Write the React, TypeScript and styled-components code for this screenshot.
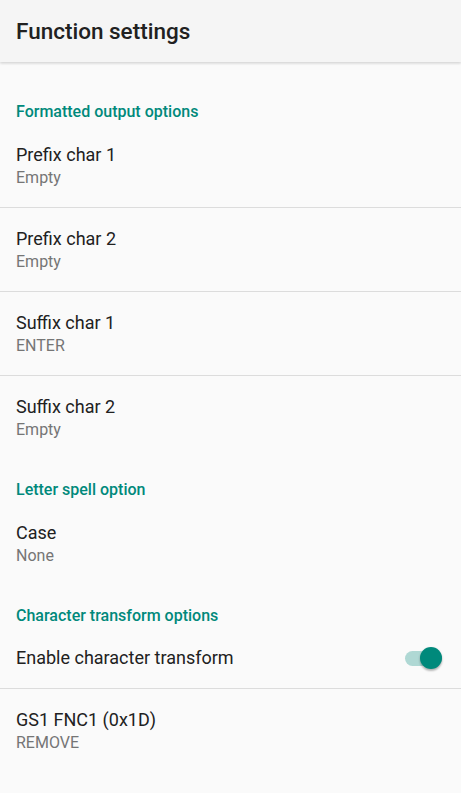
import React, { FC, useState } from 'react'
import styled, { createGlobalStyle } from 'styled-components';

const GlobalStyle = createGlobalStyle`
  html, body {
    margin: 0;
    padding: 0;
    background: #fafafa;
  }
  body {
    font-family: Roboto, "Noto Sans", sans-serif;
    -webkit-font-smoothing: antialiased;
  }
`;

type Pref = { title: string; summary?: string; toggle?: boolean };
type Category = { title: string; items: Pref[] };

const CATEGORIES: Category[] = [
  {
    title: 'Formatted output options',
    items: [
      { title: 'Prefix char 1', summary: 'Empty' },
      { title: 'Prefix char 2', summary: 'Empty' },
      { title: 'Suffix char 1', summary: 'ENTER' },
      { title: 'Suffix char 2', summary: 'Empty' },
    ],
  },
  {
    title: 'Letter spell option',
    items: [{ title: 'Case', summary: 'None' }],
  },
  {
    title: 'Character transform options',
    items: [
      { title: 'Enable character transform', toggle: true },
      { title: 'GS1 FNC1 (0x1D)', summary: 'REMOVE' },
    ],
  },
];

const Switch: FC<{ initial: boolean }> = ({ initial }) => {
  const [on, setOn] = useState(initial);
  return (
    <StyledSwitch onClick={() => setOn(v => !v)}>
      <StyledTrack $on={on} />
      <StyledThumb $on={on} />
    </StyledSwitch>
  );
};

const App: FC = () => {
  return (
    <>
      <GlobalStyle />
      <StyledScreen>
        <StyledToolbar>
          <StyledToolbarTitle>Function settings</StyledToolbarTitle>
        </StyledToolbar>
        <StyledList>
          {CATEGORIES.map(cat => (
            <section key={cat.title}>
              <StyledCategory>{cat.title}</StyledCategory>
              {cat.items.map((item, i) => (
                <StyledItem key={item.title} $single={!item.summary} $divider={i < cat.items.length - 1}>
                  <StyledText>
                    <StyledTitle>{item.title}</StyledTitle>
                    {item.summary && <StyledSummary>{item.summary}</StyledSummary>}
                  </StyledText>
                  {item.toggle !== undefined && <Switch initial={item.toggle} />}
                </StyledItem>
              ))}
            </section>
          ))}
        </StyledList>
      </StyledScreen>
    </>
  );
};

const StyledScreen = styled.div`
  display: flex;
  flex-direction: column;
  width: 100%;
  min-height: 793px;
  background: #fafafa;
`;

const StyledToolbar = styled.header`
  position: relative;
  z-index: 1;
  display: flex;
  align-items: center;
  height: 62px;
  padding: 0 16px;
  background: #f5f5f5;
  box-shadow: 0 1px 3px rgba(0, 0, 0, 0.12), 0 2px 2px rgba(0, 0, 0, 0.05);
`;

const StyledToolbarTitle = styled.h1`
  margin: 0;
  font-size: 22.5px;
  font-weight: 500;
  color: #212121;
  line-height: 62px;
`;

const StyledList = styled.div`
  display: flex;
  flex-direction: column;
  padding-top: 20px;
`;

const StyledCategory = styled.h2`
  margin: 0;
  padding: 20px 16px 2px;
  font-size: 16px;
  line-height: 20px;
  font-weight: 500;
  color: #00897b;
`;

const StyledItem = styled.div<{ $single: boolean; $divider: boolean }>`
  display: flex;
  align-items: center;
  justify-content: space-between;
  padding: ${p => (p.$single ? '18px 19px 18px 16px' : '19px 19px 19px 16px')};
  border-bottom: 1px solid ${p => (p.$divider ? '#dcdcdc' : 'transparent')};
`;

const StyledText = styled.div`
  display: flex;
  flex-direction: column;
`;

const StyledTitle = styled.span`
  font-size: 18px;
  line-height: 24px;
  color: #212121;
`;

const StyledSummary = styled.span`
  margin-top: 1px;
  font-size: 16px;
  line-height: 20px;
  color: #757575;
`;

const StyledSwitch = styled.div`
  position: relative;
  display: flex;
  align-items: center;
  width: 37px;
  height: 24px;
  cursor: pointer;
`;

const StyledTrack = styled.div<{ $on: boolean }>`
  width: 37px;
  height: 15px;
  border-radius: 8px;
  background: ${p => (p.$on ? '#afd8d4' : '#c4c4c4')};
`;

const StyledThumb = styled.div<{ $on: boolean }>`
  position: absolute;
  top: 1px;
  left: ${p => (p.$on ? '15px' : '0')};
  width: 22px;
  height: 22px;
  border-radius: 50%;
  background: ${p => (p.$on ? '#00897b' : '#ececec')};
  box-shadow: 0 2px 2px rgba(0, 0, 0, 0.22), 0 1px 3px rgba(0, 0, 0, 0.12);
`;

export default App
